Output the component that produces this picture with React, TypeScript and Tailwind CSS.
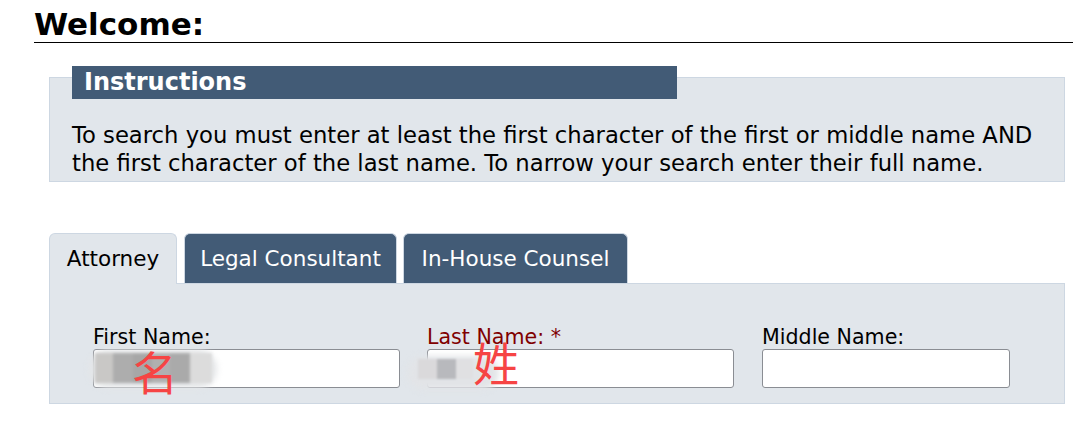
import React from 'react';

const font = { fontFamily: '"DejaVu Sans", Verdana, sans-serif' };
const cjk = { fontFamily: '"Noto Sans CJK SC", sans-serif' };

export default function App() {
  return (
    <div className="bg-white w-[1075px] h-[445px] overflow-hidden pl-[34px] text-black" style={font}>
      <h1 className="mt-[6px] w-[1039px] border-b border-black text-[31px] font-bold leading-[36px]">Welcome:</h1>

      {/* Instructions */}
      <div className="ml-[15px] mt-[34px] w-[1016px] border border-[#cdd7e2] bg-[#e1e6eb]">
        <div className="-mt-[12px] ml-[22px] w-[605px] h-[33px] bg-[#425b76] pl-[12px] text-[24px] font-bold leading-[33px] text-white">
          Instructions
        </div>
        <p className="mt-[22px] ml-[22px] pb-[4px] text-[22.7px] leading-[28px] whitespace-nowrap">
          To search you must enter at least the first character of the first or middle name AND
          <br />
          the first character of the last name. To narrow your search enter their full name.
        </p>
      </div>

      {/* Tabs */}
      <div className="ml-[15px] mt-[51px] w-[1016px]">
        <div className="flex items-end h-[50px] text-[21.5px]">
          <div className="relative z-10 w-[128px] h-[51px] -mb-px text-center rounded-t-[6px] border border-b-0 border-[#cdd7e2] bg-[#e1e6eb] leading-[50px]">
            Attorney
          </div>
          <div className="ml-[7px] w-[213px] h-[50px] text-center rounded-t-[6px] border border-b-0 border-[#cdd7e2] bg-[#425b76] leading-[50px] text-white">
            Legal Consultant
          </div>
          <div className="ml-[6px] w-[225px] h-[50px] text-center rounded-t-[6px] border border-b-0 border-[#cdd7e2] bg-[#425b76] leading-[50px] text-white">
            In-House Counsel
          </div>
        </div>

        <div className="border border-[#cdd7e2] bg-[#e1e6eb] pl-[43px] pt-[41px] pb-[15px]">
          <div className="flex text-[20.6px]">
            <div className="relative w-[307px]">
              <label className="block leading-[24px]">First Name:</label>
              <input className="block w-[307px] h-[39px] rounded-[3px] border border-[#8a8d93] bg-white" />
              {/* mosaic cover */}
              <div className="absolute left-[-4px] top-[25px] w-[128px] h-[38px] rounded-full bg-[#e4e6e8] blur-[3px]" />
              <div className="absolute left-[2px] top-[28px] flex h-[30px] blur-[1.5px]">
                <div className="w-[18px] bg-[#c9c8c6]" />
                <div className="w-[20px] bg-[#adadad]" />
                <div className="w-[19px] bg-[#a7a7a7]" />
                <div className="w-[18px] bg-[#b0b0b0]" />
                <div className="w-[20px] bg-[#aaaaaa]" />
                <div className="w-[22px] bg-[#dcdcdc]" />
              </div>
              <span className="absolute left-[39px] top-[22px] text-[46px] leading-none text-[#f64444]" style={cjk}>
                名
              </span>
            </div>

            <div className="relative ml-[27px] w-[307px]">
              <label className="block leading-[24px] text-[#800000]">Last Name: *</label>
              <input className="block w-[307px] h-[39px] rounded-[3px] border border-[#8a8d93] bg-white" />
              <div className="absolute left-[-20px] top-[31px] w-[92px] h-[34px] rounded-full bg-[#e2e4e7] blur-[3px]" />
              <div className="absolute left-[-9px] top-[34px] flex h-[20px] blur-[1px]">
                <div className="w-[19px] bg-[#dad9db]" />
                <div className="w-[19px] bg-[#b8b9bd]" />
                <div className="w-[17px] bg-[#e0e0e2]" />
              </div>
              <span className="absolute left-[46px] top-[13px] text-[46px] leading-none text-[#f64444]" style={cjk}>
                姓
              </span>
            </div>

            <div className="ml-[28px] w-[248px]">
              <label className="block leading-[24px]">Middle Name:</label>
              <input className="block w-[248px] h-[39px] rounded-[3px] border border-[#8a8d93] bg-white" />
            </div>
          </div>
        </div>
      </div>
    </div>
  );
}
